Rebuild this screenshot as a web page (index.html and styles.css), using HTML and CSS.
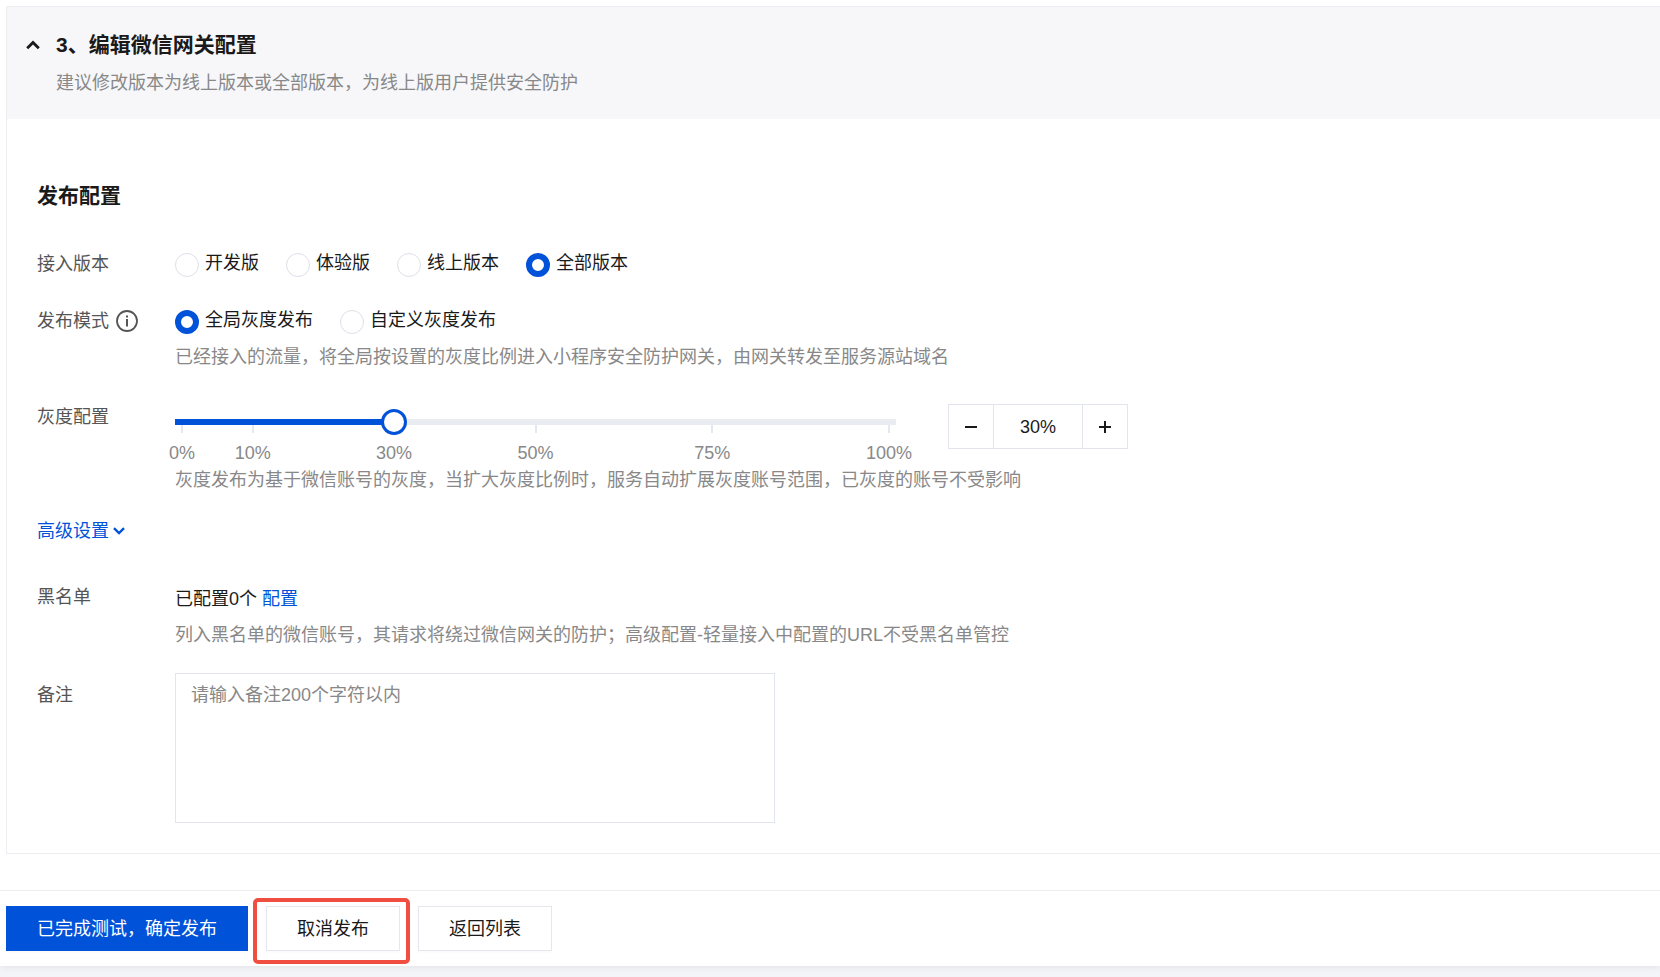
FILE: index.html
```html
<!DOCTYPE html>
<html lang="zh-CN">
<head>
  <meta charset="UTF-8" />
  <meta name="viewport" content="width=device-width, initial-scale=1.0" />
  <title>编辑微信网关配置</title>
  <link rel="stylesheet" href="styles.css">
</head>
<body>
  <div class="page">
    <section class="card">
      <header class="card-header">
        <button class="toggle" type="button" aria-label="收起">
          <svg width="14" height="10" viewBox="0 0 14 10"><path d="M1.2 8.2 L7 2.4 L12.8 8.2" fill="none" stroke="currentColor" stroke-width="2.8"/></svg>
        </button>
        <div>
          <h1>3、编辑微信网关配置</h1>
          <p class="subtitle">建议修改版本为线上版本或全部版本，为线上版用户提供安全防护</p>
        </div>
      </header>

      <form class="card-body" id="publish">
        <h2>发布配置</h2>

        <div class="row">
          <span class="label" id="l-version">接入版本</span>
          <div class="radios" role="radiogroup" aria-labelledby="l-version">
            <label><input type="radio" name="version"><span>开发版</span></label>
            <label><input type="radio" name="version"><span>体验版</span></label>
            <label><input type="radio" name="version"><span>线上版本</span></label>
            <label><input type="radio" name="version" checked><span>全部版本</span></label>
          </div>
        </div>

        <div class="row row-mode">
          <span class="label" id="l-mode">发布模式
            <svg class="info" width="22" height="22" viewBox="0 0 22 22"><circle cx="11" cy="11" r="10" fill="none" stroke="currentColor" stroke-width="1.8"/><path d="M10 5.5h2v2h-2z M10 9h2v7.5h-2z" fill="currentColor"/></svg>
          </span>
          <div>
            <div class="radios" role="radiogroup" aria-labelledby="l-mode">
              <label><input type="radio" name="mode" checked><span>全局灰度发布</span></label>
              <label><input type="radio" name="mode"><span>自定义灰度发布</span></label>
            </div>
            <p class="help">已经接入的流量，将全局按设置的灰度比例进入小程序安全防护网关，由网关转发至服务源站域名</p>
          </div>
        </div>

        <div class="row row-gray">
          <label class="label" for="ratio">灰度配置</label>
          <div>
            <div class="slider-line">
              <div class="slider">
                <input id="ratio" type="range" min="0" max="100" value="30">
                <div class="marks">
                  <span class="mark">0%</span>
                  <span class="mark">10%</span>
                  <span class="mark">30%</span>
                  <span class="mark">50%</span>
                  <span class="mark">75%</span>
                  <span class="mark">100%</span>
                </div>
              </div>
              <div class="stepper">
                <button type="button" aria-label="减少"><svg width="14" height="14" viewBox="0 0 14 14"><path d="M1 7h12" stroke="currentColor" stroke-width="2"/></svg></button>
                <input type="text" value="30%" aria-label="灰度比例">
                <button type="button" aria-label="增加"><svg width="14" height="14" viewBox="0 0 14 14"><path d="M1 7h12M7 1v12" stroke="currentColor" stroke-width="2"/></svg></button>
              </div>
            </div>
            <p class="help">灰度发布为基于微信账号的灰度，当扩大灰度比例时，服务自动扩展灰度账号范围，已灰度的账号不受影响</p>
          </div>
        </div>

        <a class="advanced" href="#">高级设置
          <svg width="12" height="8" viewBox="0 0 12 8"><path d="M1 1.2 L6 6 L11 1.2" fill="none" stroke="currentColor" stroke-width="2.4"/></svg>
        </a>

        <div class="row row-black">
          <span class="label">黑名单</span>
          <div>
            <p class="count">已配置0个 <a href="#">配置</a></p>
            <p class="help">列入黑名单的微信账号，其请求将绕过微信网关的防护；高级配置-轻量接入中配置的URL不受黑名单管控</p>
          </div>
        </div>

        <div class="row row-remark">
          <label class="label" for="remark">备注</label>
          <textarea id="remark" placeholder="请输入备注200个字符以内"></textarea>
        </div>
      </form>
    </section>

    <footer class="actions">
      <button class="btn btn-primary" type="submit" form="publish">已完成测试，确定发布</button>
      <div class="marked"><button class="btn" type="button">取消发布</button></div>
      <button class="btn" type="button">返回列表</button>
    </footer>
  </div>
</body>
</html>
```
FILE: styles.css
```css
* {
  box-sizing: border-box;
}
body {
  margin: 0;
  min-height: 100vh;
  background: #f2f4f8;
  color: #1a1a1a;
  font-family: "Liberation Sans", "Noto Sans CJK SC", sans-serif;
  font-size: 18px;
  line-height: 24px;
}
h1, h2, p {
  margin: 0;
}
h1, h2 {
  font-size: 21px;
  line-height: 30px;
}
a {
  color: #0052d9;
  text-decoration: none;
}
button, input, textarea {
  font: inherit;
  color: inherit;
}
.page {
  background: #fff;
  padding-top: 6px;
  box-shadow: 0 2px 6px rgba(0,0,0,0.06);
}

/* Tarjeta */
.card {
  margin-left: 6px;
  border: 1px solid #ebedf0;
  border-right: none;
}
.card-header {
  display: flex;
  gap: 16px;
  padding: 23px 20px 24px 19px;
  background: #f7f7fa;
}
.toggle {
  display: flex;
  align-items: center;
  height: 30px;
  padding: 0;
  border: none;
  background: none;
  cursor: pointer;
}
.subtitle {
  margin-top: 11px;
  color: #888;
}
.card-body {
  padding: 62px 30px 30px;
}

/* Filas del formulario */
.row {
  display: grid;
  grid-template-columns: 138px 1fr;
  margin-top: 40px;
}
.label {
  display: flex;
  align-items: center;
  align-self: start;
  gap: 7px;
  margin-top: 1px;
  color: #555;
}
.help {
  color: #888;
}
.radios {
  display: flex;
  flex-wrap: wrap;
  gap: 27px;
}
.radios label {
  display: flex;
  align-items: flex-end;
  gap: 6px;
  height: 26px;
  cursor: pointer;
}
.radios span {
  align-self: flex-start;
}
.radios input {
  appearance: none;
  width: 24px;
  height: 24px;
  margin: 0;
  border: 1px solid #dcdfe8;
  border-radius: 50%;
  background: #fff;
}
.radios input:checked {
  border: 6px solid #0052d9;
}
.row-mode {
  margin-top: 31px;
}
.row-mode .help {
  margin-top: 11px;
}
.row-gray {
  margin-top: 35px;
}
.row-black {
  margin-top: 41px;
}
.count {
  margin-top: 3px;
}
.row-black .help {
  margin-top: 12px;
}
.row-remark {
  margin-top: 26px;
}
.row-remark .label {
  margin-top: 10px;
}

/* Control deslizante */
.slider-line {
  display: flex;
  gap: 52px;
}
.slider {
  flex: 0 1 721px;
  padding-top: 15px;
}
.slider input {
  appearance: none;
  display: block;
  position: relative;
  z-index: 1;
  width: 100%;
  height: 6px;
  margin: 0;
  background: linear-gradient(to right, #0052d9 30%, #e9ecf1 30%);
}
.slider input::-webkit-slider-thumb {
  appearance: none;
  width: 14px;
  height: 14px;
  border-radius: 50%;
  background: #fff;
  box-shadow: 0 0 0 3px #fff, 0 0 0 6px #0052d9;
}
.marks {
  display: grid;
  grid-template-columns: 10fr 20fr 20fr 25fr 25fr 0;
  padding: 0 7px;
  color: #888;
}
.mark {
  display: flex;
  flex-direction: column;
  align-items: center;
  width: 0;
}
.mark::before {
  content: "";
  width: 2px;
  height: 8px;
  margin-bottom: 8px;
  background: #e4e8ef;
}
.row-gray .help {
  margin-top: 3px;
}
.stepper {
  display: flex;
  width: 180px;
  height: 45px;
  border: 1px solid #e2e5ee;
}
.stepper button {
  display: flex;
  align-items: center;
  justify-content: center;
  width: 44px;
  padding: 0;
  border: none;
  background: #fff;
}
.stepper input {
  flex: 1;
  min-width: 0;
  padding: 0;
  border: solid #e2e5ee;
  border-width: 0 1px;
  text-align: center;
}

.advanced {
  display: inline-flex;
  align-items: center;
  gap: 4px;
  margin-top: 27px;
  vertical-align: top;
}
textarea {
  width: 600px;
  max-width: 100%;
  height: 150px;
  padding: 9px 15px;
  border: 1px solid #e2e5ee;
  resize: none;
}
textarea::placeholder {
  color: #888;
}

/* Botones */
.actions {
  display: flex;
  gap: 18px;
  margin-top: 36px;
  padding: 15px 6px;
  border-top: 1px solid #ebedf0;
}
.btn {
  height: 45px;
  padding: 0 30px;
  border: 1px solid #e5e6ee;
  background: #fff;
  box-shadow: 0 2px 2px rgba(0,0,0,0.02);
  cursor: pointer;
}
.btn-primary {
  border-color: #0052d9;
  background: #0052d9;
  color: #fff;
}
.marked {
  position: relative;
}
.marked::after {
  content: "";
  position: absolute;
  inset: -8px -10px -13px -13px;
  border: 4px solid #f04e40;
  border-radius: 5px;
  pointer-events: none;
}
```
